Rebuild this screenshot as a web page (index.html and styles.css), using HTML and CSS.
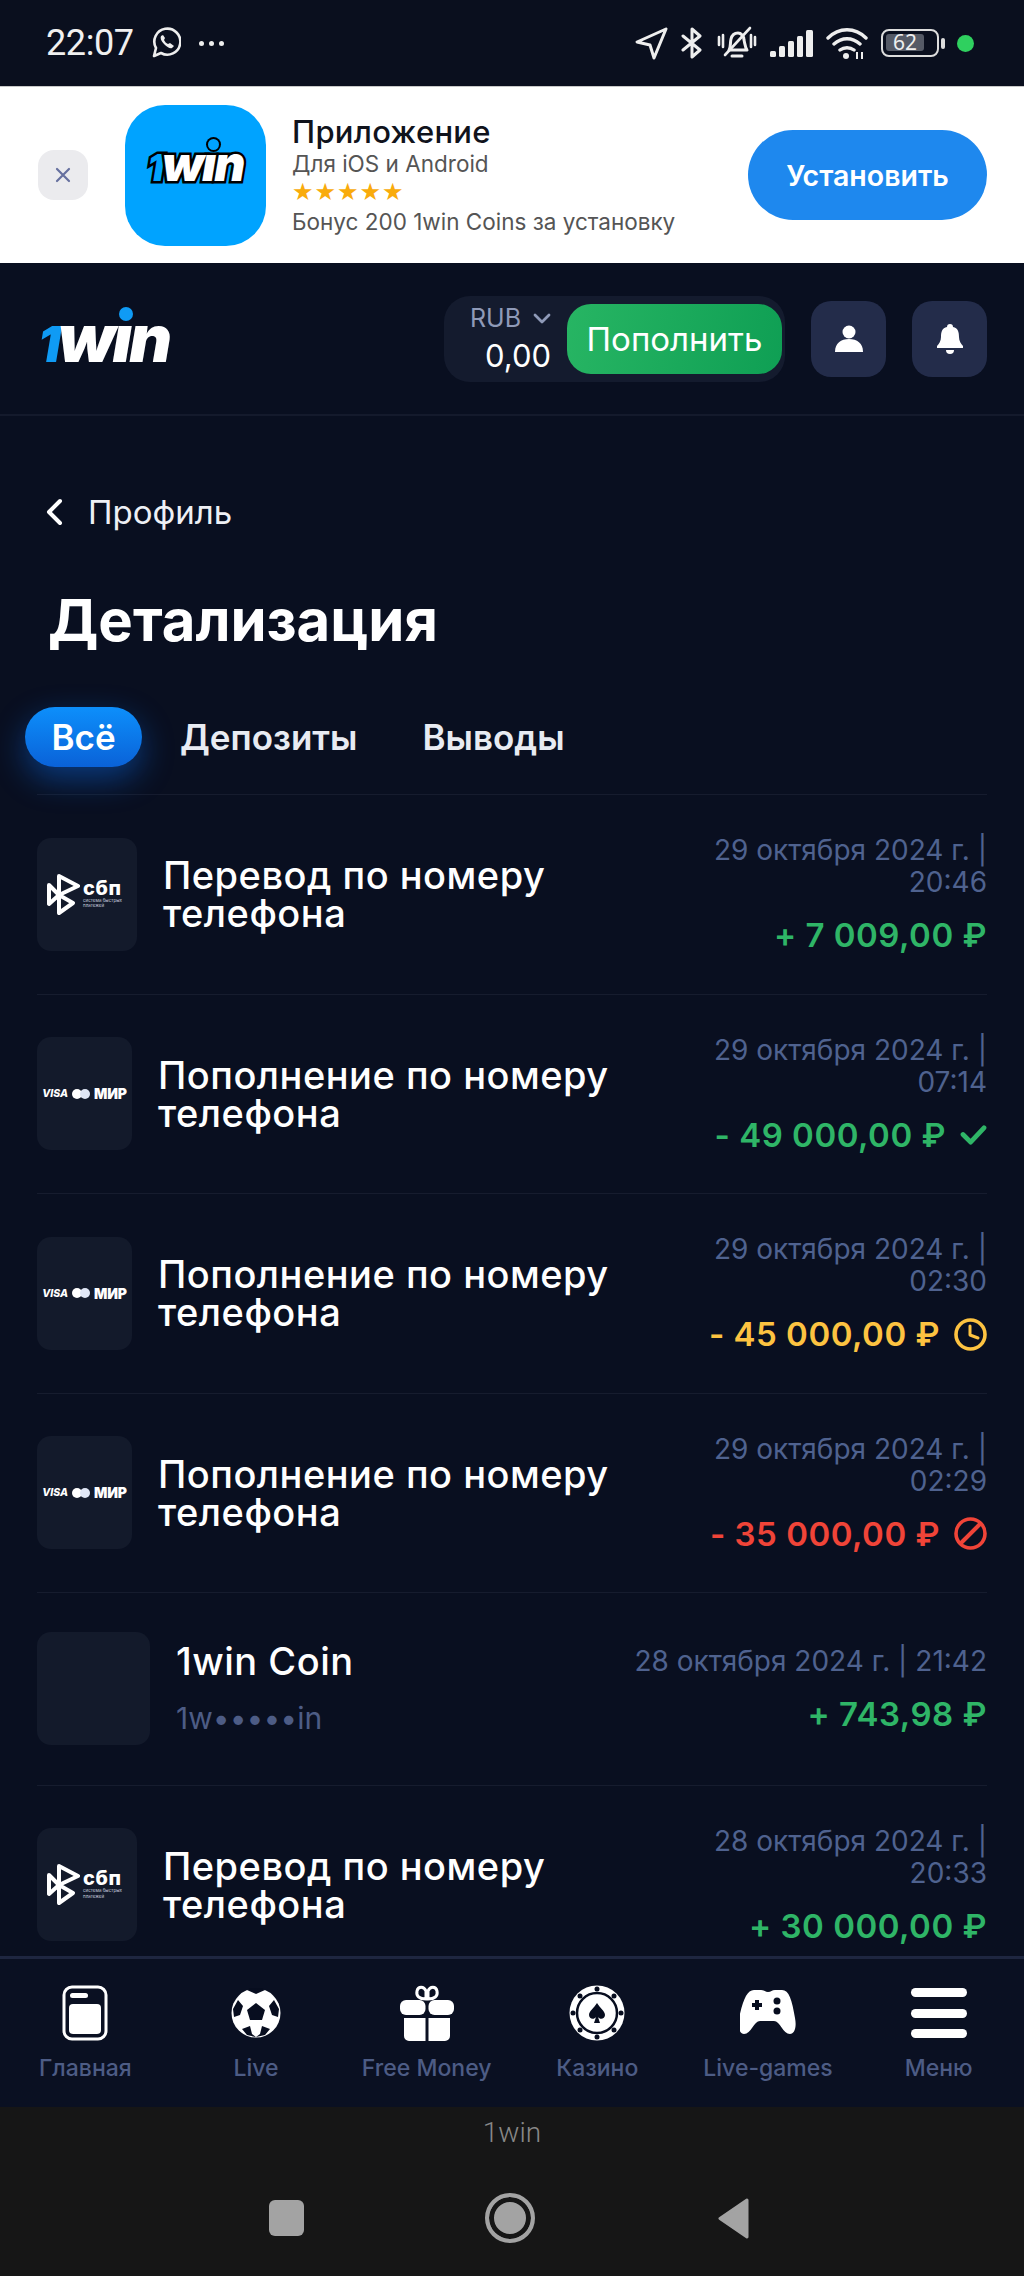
FILE: index.html
```html
<!DOCTYPE html>
<html lang="ru">
<head>
<meta charset="utf-8">
<title>1win</title>
<link rel="stylesheet" href="styles.css">
</head>
<body>
<div class="status">
  <div class="status-left">
    <span class="clock">22:07</span>
    <svg class="wa" viewBox="0 0 30 32"><path d="M3 29l2-8A13 13 0 1 1 10 26z" fill="none" stroke="#eee" stroke-width="2.6" stroke-linejoin="round"/><path d="M10 9c-1 2 0 5 3 8s6 5 8 4l2-2-4-3-2 1c-2-1-3-2-4-4l1-2-2-3z" fill="#eee"/></svg>
    <span class="more"><i></i><i></i><i></i></span>
  </div>
  <div class="status-right">
    <svg class="s-loc" viewBox="0 0 33 33"><path d="M31 2L2 15l13 3 4 13z" fill="none" stroke="#eee" stroke-width="3" stroke-linejoin="round"/></svg>
    <svg class="s-bt" viewBox="0 0 22 32"><path d="M2 9l17 14-8 7V2l8 7L2 23" fill="none" stroke="#eee" stroke-width="3" stroke-linejoin="round" stroke-linecap="round"/></svg>
    <svg class="s-bell" viewBox="0 0 40 34"><path d="M12 24c2-3 1-7 2-11 1-4 4-6 7-6s6 3 6 7c1 4 1 7 3 10z M15 30h10" fill="none" stroke="#eee" stroke-width="3" stroke-linejoin="round" stroke-linecap="round"/><path d="M8 29L33 2M2 11v8M6 9v12M34 9v12M38 11v8" stroke="#eee" stroke-width="2.6" stroke-linecap="round"/></svg>
    <svg class="s-sig" viewBox="0 0 43 27"><rect x="0" y="21" width="6" height="6" rx="1.5"/><rect x="9" y="16" width="6" height="11" rx="1.5"/><rect x="18" y="11" width="6" height="16" rx="1.5"/><rect x="27" y="6" width="6" height="21" rx="1.5"/><rect x="36" y="0" width="7" height="27" rx="1.5"/></svg>
    <svg class="s-wifi" viewBox="0 0 42 32"><path d="M2 11c11-11 27-11 38 0M8 17c8-7 18-7 26 0M14 23c4-3 10-3 14 0" fill="none" stroke="#eee" stroke-width="3.4" stroke-linecap="round"/><circle cx="20" cy="29" r="3" fill="#eee"/><path d="M31 25v7M36 25v7" stroke="#eee" stroke-width="2"/></svg>
    <div class="battery"><div class="batt-body"><div class="batt-fill">62</div></div><i class="batt-cap"></i></div>
    <i class="green-dot"></i>
  </div>
</div>

<div class="banner">
  <div class="close"><svg viewBox="0 0 16 16"><path d="M2 2l12 12M14 2L2 14" stroke="#66709f" stroke-width="2.2" stroke-linecap="round"/></svg></div>
  <div class="app-icon"><span class="logo logo-app"><b class="one">1</b>wın<i class="dot"></i></span></div>
  <div class="app-text">
    <div class="app-name">Приложение</div>
    <div class="app-sub">Для iOS и Android</div>
    <div class="stars">★★★★★</div>
    <div class="app-bonus">Бонус 200 1win Coins за установку</div>
  </div>
  <div class="install">Установить</div>
</div>

<header class="header">
  <span class="logo logo-main"><b class="one">1</b>wın<i class="dot"></i></span>
  <div class="header-right">
    <div class="balance">
      <div class="bal-text">
        <div class="bal-cur">RUB <svg viewBox="0 0 18 11"><path d="M2 2l7 7 7-7" fill="none" stroke="#8f9ab8" stroke-width="2.8" stroke-linecap="round" stroke-linejoin="round"/></svg></div>
        <div class="bal-val">0,00</div>
      </div>
      <div class="topup">Пополнить</div>
    </div>
    <div class="round-btn"><svg class="ic-user" viewBox="0 0 30 30"><circle cx="15" cy="8" r="6.5" fill="#fff"/><path d="M1 28c0-9 6-13 14-13s14 4 14 13z" fill="#fff"/></svg></div>
    <div class="round-btn"><svg class="ic-bell" viewBox="0 0 30 32"><path d="M15 1c2 0 3 1 3 3 5 1 6 5 6 10 0 4 2 7 4 9v2H2v-2c2-2 4-5 4-9 0-5 1-9 6-10 0-2 1-3 3-3z" fill="#fff"/><path d="M11 27h8a4 4 0 0 1-8 0z" fill="#fff"/></svg></div>
  </div>
</header>

<main class="main">
  <div class="back"><svg viewBox="0 0 18 28"><path d="M15 3L4 14l11 11" fill="none" stroke="#fff" stroke-width="4" stroke-linecap="round" stroke-linejoin="round"/></svg><span>Профиль</span></div>
  <h1 class="title">Детализация</h1>
  <div class="tabs">
    <span class="tab tab-active">Всё</span>
    <span class="tab">Депозиты</span>
    <span class="tab">Выводы</span>
  </div>

  <div class="list">
    <div class="row">
      <div class="left">
        <div class="tile tile-sbp">
          <svg class="sbp-mark" viewBox="0 0 33 41"><path d="M12 2l19 10-19 9zM2 11l10 10L2 30zM12 21l14 8-14 10z" fill="none" stroke="#fff" stroke-width="4" stroke-linejoin="round"/></svg>
          <div class="sbp-text"><b>сбп</b><small>система быстрых<br>платежей</small></div>
        </div>
        <div class="name">Перевод по номеру<br>телефона</div>
      </div>
      <div class="right">
        <div class="date">29 октября 2024 г. |<br>20:46</div>
        <div class="amount green">+ 7 009,00 ₽</div>
      </div>
    </div>

    <div class="row">
      <div class="left">
        <div class="tile tile-card"><span class="visa">VISA</span><span class="mc"><i></i><i></i></span><span class="mir">МИР</span></div>
        <div class="name">Пополнение по номеру<br>телефона</div>
      </div>
      <div class="right">
        <div class="date">29 октября 2024 г. |<br>07:14</div>
        <div class="amount green">- 49 000,00 ₽ <svg class="st st-check" viewBox="0 0 28 22"><path d="M3 11l8 8L25 4" fill="none" stroke="#2fb567" stroke-width="5" stroke-linecap="round" stroke-linejoin="round"/></svg></div>
      </div>
    </div>

    <div class="row">
      <div class="left">
        <div class="tile tile-card"><span class="visa">VISA</span><span class="mc"><i></i><i></i></span><span class="mir">МИР</span></div>
        <div class="name">Пополнение по номеру<br>телефона</div>
      </div>
      <div class="right">
        <div class="date">29 октября 2024 г. |<br>02:30</div>
        <div class="amount yellow">- 45 000,00 ₽ <svg class="st" viewBox="0 0 33 33"><circle cx="16.5" cy="16.5" r="14.5" fill="none" stroke="#fdc341" stroke-width="3.6"/><path d="M16 8v9l8 3" fill="none" stroke="#fdc341" stroke-width="3" stroke-linecap="round" stroke-linejoin="round"/></svg></div>
      </div>
    </div>

    <div class="row">
      <div class="left">
        <div class="tile tile-card"><span class="visa">VISA</span><span class="mc"><i></i><i></i></span><span class="mir">МИР</span></div>
        <div class="name">Пополнение по номеру<br>телефона</div>
      </div>
      <div class="right">
        <div class="date">29 октября 2024 г. |<br>02:29</div>
        <div class="amount red">- 35 000,00 ₽ <svg class="st" viewBox="0 0 33 33"><circle cx="16.5" cy="16.5" r="14.5" fill="none" stroke="#f04438" stroke-width="3.6"/><path d="M7 26L26 7" stroke="#f04438" stroke-width="4"/></svg></div>
      </div>
    </div>

    <div class="row">
      <div class="left">
        <div class="tile tile-coin"></div>
        <div class="coin-text">
          <div class="name">1win Coin</div>
          <div class="coin-sub">1w•••••in</div>
        </div>
      </div>
      <div class="right right-coin">
        <div class="date">28 октября 2024 г. | 21:42</div>
        <div class="amount green">+ 743,98 ₽</div>
      </div>
    </div>

    <div class="row">
      <div class="left">
        <div class="tile tile-sbp">
          <svg class="sbp-mark" viewBox="0 0 33 41"><path d="M12 2l19 10-19 9zM2 11l10 10L2 30zM12 21l14 8-14 10z" fill="none" stroke="#fff" stroke-width="4" stroke-linejoin="round"/></svg>
          <div class="sbp-text"><b>сбп</b><small>система быстрых<br>платежей</small></div>
        </div>
        <div class="name">Перевод по номеру<br>телефона</div>
      </div>
      <div class="right">
        <div class="date">28 октября 2024 г. |<br>20:33</div>
        <div class="amount green">+ 30 000,00 ₽</div>
      </div>
    </div>
  </div>
</main>

<nav class="nav">
  <div class="nav-item">
    <svg class="nav-ic" viewBox="0 0 46 56"><rect x="2" y="2" width="42" height="52" rx="8" fill="none" stroke="#fff" stroke-width="3"/><rect x="8" y="8" width="18" height="5" rx="2.5" fill="#fff"/><rect x="7" y="19" width="32" height="30" rx="4" fill="#fff"/></svg>
    <span>Главная</span>
  </div>
  <div class="nav-item">
    <svg class="nav-ic" viewBox="0 0 50 56"><circle cx="25" cy="28" r="24.5" fill="#fff"/><path d="M25 18l9 7-3 10H19l-3-10z" fill="#070d1f"/><path d="M16 5l9 4 9-4-3-2H19zM2 24l5-9 5 6-3 9-6 2zM48 24l-5-9-5 6 3 9 6 2zM11 44l8-3 2 8 4 3-9-2zM39 44l-8-3-2 8-4 3 9-2z" fill="#070d1f"/></svg>
    <span>Live</span>
  </div>
  <div class="nav-item">
    <svg class="nav-ic" viewBox="0 0 54 56"><rect x="0" y="15" width="25.5" height="15" rx="6" fill="#fff"/><rect x="28.5" y="15" width="25.5" height="15" rx="6" fill="#fff"/><path d="M4 33h21.500v23H9a5 5 0 0 1-5-5zM28.500 33H50v18a5 5 0 0 1-5 5H28.500z" fill="#fff"/><path d="M26 14c-7 0-10-3-9-8s7-5 9 0zM28 14c7 0 10-3 9-8s-7-5-9 0z" fill="none" stroke="#fff" stroke-width="3"/></svg>
    <span>Free Money</span>
  </div>
  <div class="nav-item">
    <svg class="nav-ic" viewBox="0 0 56 56"><circle cx="28" cy="28" r="27.500" fill="#fff"/><circle cx="28" cy="28" r="20" fill="none" stroke="#070d1f" stroke-width="2.500"/><circle cx="28" cy="28" r="15" fill="#fff"/><path d="M28 18c3 5 8 8 8 12 0 4-5 5-7 2l2 6h-6l2-6c-2 3-7 2-7-2 0-4 5-7 8-12z" fill="#070d1f"/><g fill="#070d1f"><circle cx="28" cy="4" r="2.500"/><circle cx="28" cy="52" r="2.500"/><circle cx="4" cy="28" r="2.500"/><circle cx="52" cy="28" r="2.500"/><circle cx="11" cy="11" r="2.500"/><circle cx="45" cy="11" r="2.500"/><circle cx="11" cy="45" r="2.500"/><circle cx="45" cy="45" r="2.500"/></g></svg>
    <span>Казино</span>
  </div>
  <div class="nav-item">
    <svg class="nav-ic" viewBox="0 0 56 56"><path d="M14 5h7c3 0 4 2 7 2s4-2 7-2h7c7 0 10 10 13 28 2 10-1 16-5 16-7 0-10-13-16-13H20c-6 0-9 13-16 13-4 0-7-6-5-16C3 15 7 5 14 5z" fill="#fff"/><path d="M12 20h10M17 15v10" stroke="#070d1f" stroke-width="4"/><circle cx="37" cy="16" r="3.500" fill="#070d1f"/><circle cx="37" cy="26" r="3.500" fill="#070d1f"/></svg>
    <span>Live-games</span>
  </div>
  <div class="nav-item">
    <div class="burger nav-ic"><i></i><i></i><i></i></div>
    <span>Меню</span>
  </div>
</nav>

<footer class="android">
  <div class="android-title">1win</div>
  <div class="android-btns">
    <i class="a-square"></i>
    <i class="a-circle"></i>
    <svg class="a-back" viewBox="0 0 33 41"><path d="M30 2L3 20.500 30 39z" fill="#a3a3a3" stroke="#a3a3a3" stroke-width="3" stroke-linejoin="round"/></svg>
  </div>
</footer>
</body>
</html>
```
FILE: styles.css
```css
* { box-sizing: border-box; }
html, body { margin: 0; padding: 0; }
body {
  width: 1024px;
  height: 2276px;
  overflow: hidden;
  display: flex;
  flex-direction: column;
  background: #090f20;
  color: #fff;
  font-family: Inter, "Noto Sans", sans-serif;
}
i { display: block; font-style: normal; }

/* status bar */
.status {
  height: 87px;
  flex: none;
  background: #0a0f1e;
  display: flex;
  justify-content: space-between;
  align-items: center;
  padding: 0 50px 0 46px;
  border-bottom: 1px solid #c8c8c8;
}
.status-left, .status-right { display: flex; align-items: center; }
.clock { font: 400 36px Roboto, sans-serif; color: #f0f0f0; letter-spacing: -.4px; }
.wa { width: 30px; height: 32px; margin-left: 17px; }
.more { display: flex; gap: 5px; margin-left: 18px; }
.more i { width: 5px; height: 5px; border-radius: 50%; background: #eee; }
.s-loc { width: 33px; height: 33px; }
.s-bt { width: 22px; height: 32px; margin-left: 13px; }
.s-bell { width: 40px; height: 34px; margin-left: 14px; }
.s-sig { width: 43px; height: 27px; margin-left: 13px; fill: #eee; }
.s-wifi { width: 42px; height: 32px; margin-left: 13px; }
.battery { display: flex; align-items: center; margin-left: 13px; }
.batt-body { width: 58px; height: 28px; border: 2.500px solid #ddd; border-radius: 8px; padding: 3px; }
.batt-fill { width: 38px; height: 17px; background: #555a66; border-radius: 3px; font: 400 21px/17px "Noto Sans", sans-serif; color: #eee; text-indent: 7px; white-space: nowrap; }
.batt-cap { width: 4px; height: 11px; border-radius: 2px; background: #ddd; margin-left: 2px; }
.green-dot { width: 17px; height: 17px; border-radius: 50%; background: #2fd05f; margin-left: 12px; }

/* banner */
.banner {
  height: 176px;
  flex: none;
  background: #fff;
  display: flex;
  align-items: center;
  padding: 0 37px 0 38px;
  color: #10131c;
}
.close {
  width: 50px; height: 50px; border-radius: 16px; background: #ebebee;
  display: flex; align-items: center; justify-content: center; flex: none;
}
.close svg { width: 16px; height: 16px; }
.app-icon {
  width: 141px; height: 141px; border-radius: 40px; background: #00a3ff;
  margin-left: 37px; flex: none;
  display: flex; align-items: center; justify-content: center;
}
.app-text { margin-left: 26px; flex: 1; }
.app-name { font-size: 31px; line-height: 36px; font-weight: 500; letter-spacing: .3px; }
.app-sub { font-size: 22.500px; line-height: 28px; color: #555; }
.stars { font: 24px/22px "DejaVu Sans", sans-serif; color: #f9ab0b; letter-spacing: 1px; margin: 3px 0 5px; }
.app-bonus { font-size: 22.500px; line-height: 28px; color: #555; }
.install {
  width: 239px; height: 90px; border-radius: 45px; background: #1e88ee;
  color: #fff; font-size: 28.500px; font-weight: 600;
  display: flex; align-items: center; justify-content: center; flex: none;
}

/* logo */
.logo {
  position: relative;
  display: inline-block;
  font-weight: 900;
  font-style: italic;
  color: #fff;
  white-space: nowrap;
}
.logo .one { color: #0f9bf5; font-weight: 900; font-size: .76em; }
.logo .dot { position: absolute; border-radius: 50%; background: #0f9bf5; }
.logo-main { font-size: 66px; line-height: 60px; letter-spacing: -3px; margin-top: 4px; }
.logo-main .dot { width: 14px; height: 14px; left: 81px; top: -1px; }
.logo-app {
  font-size: 48px; line-height: 44px; letter-spacing: -2px;
  -webkit-text-stroke: 5px #000; paint-order: stroke fill;
  margin-top: -18px;
}
.logo-app .one { color: #00a3ff; }
.logo-app .dot { width: 11px; height: 11px; left: 60px; top: -3px; box-shadow: 0 0 0 2px #000; background: #00a3ff; }

/* header */
.header {
  height: 153px;
  flex: none;
  display: flex;
  align-items: center;
  justify-content: space-between;
  padding: 0 37px 0 38px;
  background: #090f20;
  border-bottom: 2px solid #141a2c;
}
.header-right { display: flex; align-items: center; }
.balance {
  width: 341px; height: 86px; border-radius: 26px; background: #141b2e;
  display: flex; align-items: center; justify-content: flex-end; padding-right: 3px;
}
.bal-text { text-align: right; margin-right: 16px; }
.bal-cur { font-size: 25px; line-height: 32px; color: #8f9ab8; display: flex; align-items: center; gap: 12px; }
.bal-cur svg { width: 18px; height: 11px; }
.bal-val { font-size: 31px; line-height: 38px; color: #fff; margin-top: 3px; }
.topup {
  width: 215px; height: 70px; border-radius: 24px;
  background: linear-gradient(100deg, #27b563, #0f9f54);
  font-size: 33px; color: #fff;
  display: flex; align-items: center; justify-content: center;
}
.round-btn {
  width: 75px; height: 76px; border-radius: 20px; background: #232c4a; margin-left: 26px;
  display: flex; align-items: center; justify-content: center;
}
.ic-user { width: 30px; height: 30px; }
.ic-bell { width: 30px; height: 32px; }

/* main */
.main { flex: 1; min-height: 0; overflow: hidden; background: #090f20; }
.back { display: flex; align-items: center; padding: 78px 0 0 45px; height: 114px; }
.back svg { width: 18px; height: 28px; }
.back span { font-size: 33px; line-height: 36px; margin-left: 25px; color: #eef0f5; }
.title { margin: 56px 0 0 48px; font-size: 58px; line-height: 68px; font-weight: 700; }
.tabs { display: flex; align-items: center; padding: 53px 0 0 25px; height: 113px; }
.tab { font-size: 35px; font-weight: 600; color: #e8ebf2; margin-right: 65px; line-height: 60px; }
.tab-active {
  width: 117px; height: 60px; border-radius: 30px; margin-right: 38px; text-align: center; color: #fff;
  background: linear-gradient(180deg, #0d8ffb, #0a62d8);
  box-shadow: 0 12px 32px rgba(10, 110, 240, .45);
}
.list { margin: 27px 37px 0 37px; }
.row {
  display: flex; align-items: center; justify-content: space-between;
  border-top: 1px solid #161c2e;
  padding: 39.250px 0;
}
.left { display: flex; align-items: center; gap: 26px; }
.tile { height: 113px; border-radius: 14px; background: #131a2b; flex: none; }
.tile-sbp { width: 100px; position: relative; display: flex; align-items: center; padding-left: 10px; }
.sbp-mark { width: 33px; height: 41px; flex: none; }
.sbp-text { margin-left: 3px; }
.sbp-text b { display: block; font-size: 20px; line-height: 16px; font-weight: 800; letter-spacing: .6px; color: #fff; }
.sbp-text small { display: block; font-size: 4.500px; line-height: 5.500px; color: #c8cede; white-space: nowrap; margin-top: 2px; }
.tile-card { width: 95px; display: flex; align-items: center; justify-content: center; gap: 4px; }
.visa { font-size: 10.500px; font-weight: 800; font-style: italic; color: #fff; }
.mc { display: flex; }
.mc i { width: 10px; height: 10px; border-radius: 50%; background: #fff; }
.mc i + i { margin-left: -2px; background: #dfe6f5; }
.mir { font-size: 14px; font-weight: 900; color: #fff; letter-spacing: -.2px; }
.tile-coin { width: 113px; }
.name { font-size: 38px; line-height: 38px; font-weight: 500; letter-spacing: .5px; color: #fff; }
.coin-text .name { margin-bottom: 20px; }
.coin-sub { font-size: 30px; line-height: 36px; color: #4d5c85; }
.right { text-align: right; flex: none; height: 120px; }
.right-coin { height: 88px; }
.date { font-size: 28px; line-height: 32px; color: #4f628f; }
.amount {
  display: flex; align-items: center; justify-content: flex-end; gap: 14px;
  font-size: 33px; line-height: 38px; font-weight: 600; letter-spacing: .5px; margin-top: 18px;
}
.green { color: #2fb567; }
.yellow { color: #fdc341; }
.red { color: #f04438; }
.st { width: 33px; height: 33px; flex: none; }
.st-check { width: 27px; height: 21px; }

/* nav */
.nav {
  height: 151px; flex: none;
  display: grid; grid-template-columns: repeat(6, 1fr);
  background: #0a1022;
  border-top: 3px solid #1e2640;
  padding-top: 26px;
}
.nav-item { display: flex; flex-direction: column; align-items: center; font-size: 23px; font-weight: 500; color: #4d5c85; }
.nav-ic { height: 56px; width: 56px; }
.nav-item span { margin-top: 13px; line-height: 28px; white-space: nowrap; }
.burger { display: flex; flex-direction: column; justify-content: space-between; padding: 3px 0; }
.burger i { height: 9px; border-radius: 4.500px; background: #fff; }

/* android */
.android { height: 169px; flex: none; background: #161616; }
.android-title { text-align: center; font: 300 28px/36px Roboto, sans-serif; color: #888; padding-top: 8px; height: 44px; }
.android-btns { position: relative; display: flex; align-items: center; padding: 42px 0 0 269px; }
.a-square { width: 35px; height: 36px; border-radius: 6px; background: #a3a3a3; }
.a-circle { width: 50px; height: 50px; border-radius: 50%; margin-left: 181px; border: 4px solid #a3a3a3; background: #a3a3a3; box-shadow: inset 0 0 0 5px #161616; }
.a-back { width: 33px; height: 41px; margin-left: 182px; }
```
